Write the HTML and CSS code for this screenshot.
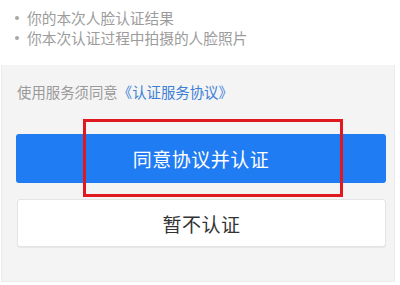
FILE: index.html
```html
<!DOCTYPE html>
<html lang="zh">
<head>
<meta charset="utf-8">
<link rel="stylesheet" href="styles.css">
</head>
<body>
<div class="page">
  <ul class="info">
    <li>你的本次人脸认证结果</li>
    <li>你本次认证过程中拍摄的人脸照片</li>
  </ul>
  <div class="panel">
    <p class="agree">使用服务须同意<span class="link">《认证服务协议》</span></p>
    <div class="actions">
      <button class="btn primary">同意协议并认证</button>
      <button class="btn secondary">暂不认证</button>
    </div>
    <div class="mark"></div>
  </div>
</div>
</body>
</html>
```
FILE: styles.css
```css
html, body {
  margin: 0;
  padding: 0;
  background: #ffffff;
  font-family: "Noto Sans CJK SC", "Noto Sans", sans-serif;
}
.page {
  width: 400px;
  height: 285px;
  overflow: hidden;
  position: relative;
}
.info {
  list-style: none;
  margin: 0;
  padding: 8px 0 0 15px;
  height: 65px;
  box-sizing: border-box;
}
.info li {
  font-size: 14.7px;
  line-height: 20px;
  color: #9c9c9c;
  display: flex;
  align-items: center;
}
.info li::before {
  content: "";
  width: 4px;
  height: 4px;
  border-radius: 50%;
  background: #a8a8a8;
  margin-right: 8px;
}
.panel {
  position: relative;
  margin: 0 5px 0 1px;
  height: 217px;
  background: #f4f4f4;
  border-left: 1px solid #ececec;
  border-right: 1px solid #ececec;
  border-bottom: 1px solid #ececec;
  box-sizing: border-box;
}
.agree {
  margin: 0;
  padding: 17px 0 0 15px;
  font-size: 14.4px;
  line-height: 20px;
  color: #9a9a9a;
}
.link {
  color: #3d7fd6;
}
.actions {
  display: flex;
  flex-direction: column;
  gap: 16px;
  padding: 32px 8px 0 14px;
}
.btn {
  font-family: inherit;
  font-size: 19px;
  border: none;
  border-radius: 3px;
  height: 49px;
  padding: 0;
  letter-spacing: 0.5px;
}
.primary {
  background: #1f7cf3;
  color: #ffffff;
}
.secondary {
  background: #ffffff;
  color: #333333;
  height: 48px;
  margin-left: 1px;
  border: 1px solid #e4e4e4;
  box-shadow: 0 1px 1px rgba(0,0,0,0.06);
}
.mark {
  position: absolute;
  left: 81px;
  top: 54px;
  width: 260px;
  height: 78px;
  border: 3.5px solid #e01820;
  box-sizing: border-box;
}
```
